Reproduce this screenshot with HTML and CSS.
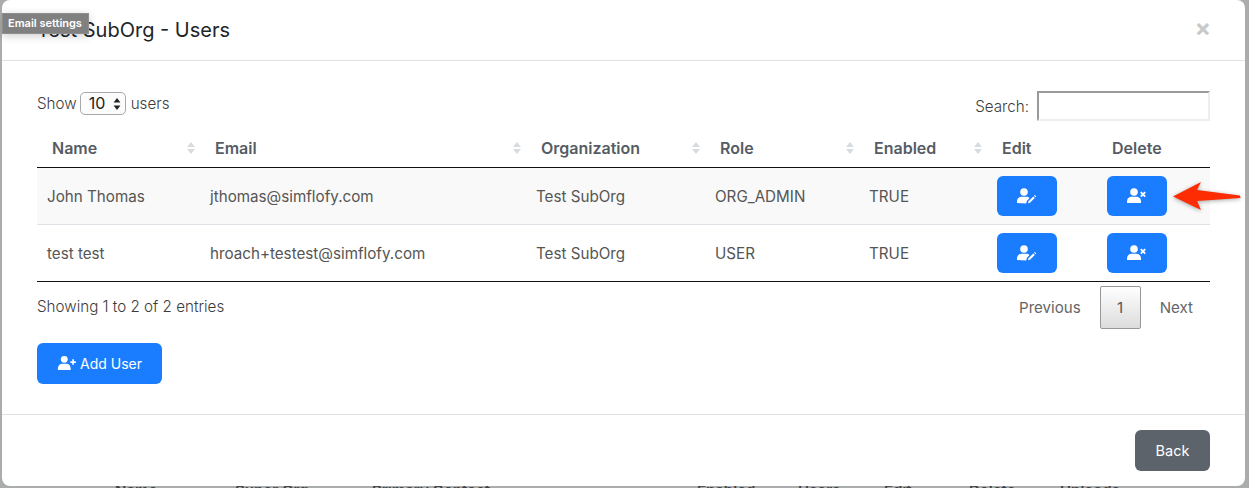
FILE: index.html
```html
<!DOCTYPE html>
<html lang="en">
<head>
<meta charset="utf-8">
<title>Test SubOrg - Users</title>
<link rel="stylesheet" href="styles.css">
</head>
<body>
<div class="behind">
  <span class="b1">Name</span><span class="b2">Super Org</span><span class="b3">Primary Contact</span><span class="b4">Enabled</span><span class="b5">Users</span><span class="b6">Edit</span><span class="b7">Delete</span><span class="b8">Uploads</span>
</div>
<div class="modal">
  <header class="modal-head">
    <h1>Test SubOrg - Users</h1>
    <span class="close">×</span>
  </header>
  <main class="modal-body">
    <div class="controls">
      <div class="length">Show <span class="select">10 <svg width="8" height="14" viewBox="0 0 8 14"><path d="M4 1l3.400 4.600H.6zM4 13L.6 8.400h6.800z" fill="#222"/></svg></span> users</div>
      <div class="search">Search: <input class="search-input" type="text" aria-label="Search"></div>
    </div>
    <table class="users">
      <colgroup><col class="c1"><col class="c2"><col class="c3"><col class="c4"><col class="c5"><col class="c6"><col class="c7"></colgroup>
      <thead>
        <tr>
          <th>Name<svg class="sort" width="8" height="14" viewBox="0 0 8 14"><path d="M4 1l4 5H0zM4 13L0 8h8z"/></svg></th>
          <th>Email<svg class="sort" width="8" height="14" viewBox="0 0 8 14"><path d="M4 1l4 5H0zM4 13L0 8h8z"/></svg></th>
          <th>Organization<svg class="sort" width="8" height="14" viewBox="0 0 8 14"><path d="M4 1l4 5H0zM4 13L0 8h8z"/></svg></th>
          <th>Role<svg class="sort" width="8" height="14" viewBox="0 0 8 14"><path d="M4 1l4 5H0zM4 13L0 8h8z"/></svg></th>
          <th>Enabled<svg class="sort" width="8" height="14" viewBox="0 0 8 14"><path d="M4 1l4 5H0zM4 13L0 8h8z"/></svg></th>
          <th>Edit</th>
          <th>Delete</th>
        </tr>
      </thead>
      <tbody>
        <tr class="odd">
          <td>John Thomas</td><td>jthomas@simflofy.com</td><td>Test SubOrg</td><td>ORG_ADMIN</td><td>TRUE</td>
          <td class="action"><button class="btn icon-btn"><svg width="20" height="16" viewBox="0 0 20 16"><circle cx="7" cy="4" r="3.800" fill="#fff"/><path d="M0 15v-1.600C0 10.500 2.400 8.800 4.500 8.800h5c1.100 0 2.200.5 3 1.200L9.800 13l-.6 2.600z" fill="#fff"/><path d="M11 15.200l.5-2 4.800-4.800 1.500 1.500-4.800 4.800zM17 7.700l.8-.8 1.500 1.500-.8.8z" fill="#fff"/></svg></button></td>
          <td class="action"><button class="btn icon-btn"><svg width="20" height="16" viewBox="0 0 20 16"><circle cx="7" cy="4" r="3.800" fill="#fff"/><path d="M0 15v-1.600C0 10.500 2.400 8.800 4.500 8.800h5c2.100 0 4.500 1.700 4.500 4.600V15z" fill="#fff"/><path d="M13.800 4.200l4.400 4.400M18.200 4.200l-4.400 4.400" stroke="#fff" stroke-width="1.800"/></svg></button></td>
        </tr>
        <tr>
          <td>test test</td><td>hroach+testest@simflofy.com</td><td>Test SubOrg</td><td>USER</td><td>TRUE</td>
          <td class="action"><button class="btn icon-btn"><svg width="20" height="16" viewBox="0 0 20 16"><circle cx="7" cy="4" r="3.800" fill="#fff"/><path d="M0 15v-1.600C0 10.500 2.400 8.800 4.500 8.800h5c1.100 0 2.200.5 3 1.200L9.800 13l-.6 2.600z" fill="#fff"/><path d="M11 15.200l.5-2 4.800-4.800 1.500 1.500-4.800 4.800zM17 7.700l.8-.8 1.500 1.500-.8.8z" fill="#fff"/></svg></button></td>
          <td class="action"><button class="btn icon-btn"><svg width="20" height="16" viewBox="0 0 20 16"><circle cx="7" cy="4" r="3.800" fill="#fff"/><path d="M0 15v-1.600C0 10.500 2.400 8.800 4.500 8.800h5c2.100 0 4.500 1.700 4.500 4.600V15z" fill="#fff"/><path d="M13.800 4.200l4.400 4.400M18.200 4.200l-4.400 4.400" stroke="#fff" stroke-width="1.800"/></svg></button></td>
        </tr>
      </tbody>
    </table>
    <div class="table-foot">
      <div class="info">Showing 1 to 2 of 2 entries</div>
      <div class="pager"><span class="page-link">Previous</span><span class="page-current">1</span><span class="page-link">Next</span></div>
    </div>
    <button class="btn add-btn"><svg width="20" height="16" viewBox="0 0 22 16"><circle cx="8" cy="4" r="3.800" fill="#fff"/><path d="M1 15.600v-1.800C1 10.800 3.400 8.800 5.500 8.800h5c2.400 0 4.500 2 4.500 5v1.800z" fill="#fff"/><path d="M17.700 4v6M14.700 7h6" stroke="#fff" stroke-width="1.800"/></svg> Add User</button>
  </main>
  <footer class="modal-foot"><button class="btn back-btn">Back</button></footer>
</div>
<div class="tooltip">Email settings</div>
<svg class="arrow" width="76" height="38" viewBox="0 0 76 38"><path d="M3 16.500L31 2l-4 8 43 5.500.5 2.500L27 21l4 9z" fill="#fe2c02"/></svg>
</body>
</html>
```
FILE: styles.css
```css
* { box-sizing: border-box; }
html, body { margin: 0; height: 488px; overflow: hidden; }
body { background: #abadac; font-family: Inter, sans-serif; font-size: 15.2px; font-weight: 300; color: #3c3c3c; position: relative; }
.behind { position: absolute; left: 0; top: 481px; width: 100%; height: 7px; overflow: hidden; font-weight: 600; font-size: 15px; color: #3f4245; }
.behind span { position: absolute; top: 0; }
.b1 { left: 115px; } .b2 { left: 235px; } .b3 { left: 372px; } .b4 { left: 697px; }
.b5 { left: 798px; } .b6 { left: 884px; } .b7 { left: 969px; } .b8 { left: 1060px; }
.modal { position: absolute; left: 2px; top: 0; width: 1243px; height: 486px; background: #fff; border-radius: 8px; display: flex; flex-direction: column; }
.modal-head { height: 61px; border-bottom: 1px solid #dee2e6; display: flex; justify-content: space-between; align-items: center; padding: 0 35px; }
.modal-head h1 { margin: 0; font-size: 20px; font-weight: 400; color: #212529; font-family: Inter, sans-serif; }
.close { font-size: 24px; font-weight: 700; color: #c8c8c8; margin-right: -1px; margin-top: -4px; line-height: 1; }
.modal-body { flex: 1; padding: 0 35px; }
.controls { display: flex; justify-content: space-between; height: 69px; padding-top: 30px; }
.length { height: 25px; line-height: 25px; display: flex; align-items: center; gap: 4px; }
.select { display: inline-flex; align-items: center; justify-content: space-between; width: 46px; height: 23px; margin: 0 1px 0 -1px; border: 1px solid #a8a8a8; border-radius: 5px; padding: 0 4px 0 8px; font-size: 16px; font-weight: 400; color: #222; background: #fcfcfc; }
.search { display: flex; align-items: flex-start; gap: 8px; line-height: 31px; }
.search-input { width: 173px; height: 30px; border: 2px solid #8e8e8e; border-color: #9a9a9a #eee #eee #9a9a9a; background: #fff; padding: 0; }
.users { width: 1173px; table-layout: fixed; border-collapse: collapse; }
.c1 { width: 163px; } .c2 { width: 326px; } .c3 { width: 179px; } .c4 { width: 154px; } .c5 { width: 128px; } .c6 { width: 110px; } .c7 { width: 113px; }
.users th { height: 37px; padding: 0 15px; text-align: left; font-size: 16px; font-weight: 600; color: #555c64; border-bottom: 1px solid #111; position: relative; }
.sort { position: absolute; right: 5px; top: 11px; fill: #d9dcde; }
.users td { height: 57px; padding: 2px 10px 0; border-bottom: 1px solid #dee2e6; color: #555; font-weight: 400; }
.users td.action { padding-top: 0; }
.users tbody tr:last-child td { border-bottom-color: #111; }
.users .odd td { background: #f9f9f9; }
.btn { border: 0; background: #1a7dff; color: #fff; font-family: Inter, sans-serif; font-size: 14px; border-radius: 6px; display: inline-flex; align-items: center; justify-content: center; padding: 0; }
.icon-btn { width: 60px; height: 40px; }
.table-foot { display: flex; justify-content: space-between; height: 61px; }
.info { padding-top: 15px; }
.pager { display: flex; align-items: flex-start; padding-top: 4px; color: #666; font-weight: 400; font-size: 15.1px; }
.page-link { padding: 0 17px 0 19px; line-height: 43px; }
.page-link:first-child { padding: 0 19px 0 0; }
.page-current { width: 41px; height: 43px; line-height: 41px; text-align: center; border: 1px solid #979797; border-radius: 2px; background: linear-gradient(#fff, #dcdcdc); color: #555; }
.add-btn { width: 125px; height: 41px; gap: 3px; font-weight: 400; }
.modal-foot { height: 72px; border-top: 1px solid #dee2e6; display: flex; justify-content: flex-end; align-items: flex-start; padding: 15px 35px 0; }
.back-btn { width: 75px; height: 41px; background: #5c636a; font-size: 14.5px; }
.tooltip { position: absolute; left: 2px; top: 13px; width: 87px; height: 21px; background: #808080; border: 1px solid #8e8e8e; color: #fff; font-size: 11px; font-weight: 600; line-height: 19px; padding-left: 5px; white-space: nowrap; box-shadow: 0 2px 8px rgba(0,0,0,.2); }
.arrow { position: absolute; left: 1170px; top: 180px; filter: drop-shadow(0 1px 2px rgba(0,0,0,.35)); }
```
